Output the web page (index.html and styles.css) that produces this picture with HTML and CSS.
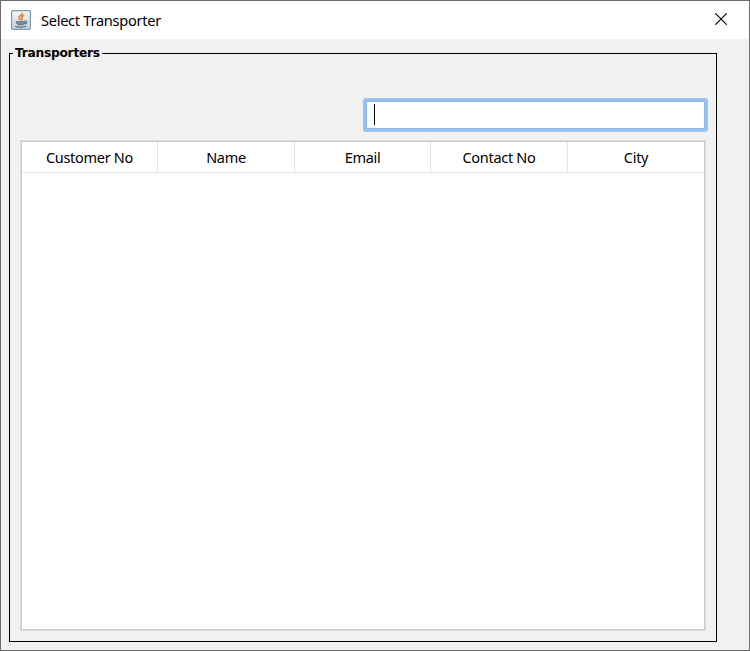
FILE: index.html
```html
<!DOCTYPE html>
<html lang="en">
<head>
<meta charset="utf-8">
<title>Select Transporter</title>
<link rel="stylesheet" href="styles.css">
</head>
<body>
<div class="window">
  <header class="titlebar">
    <svg class="app-icon" viewBox="0 0 20 20">
      <defs>
        <linearGradient id="tile" x1="0" y1="0" x2="0" y2="1">
          <stop offset="0" stop-color="#f7f8f9"/>
          <stop offset="1" stop-color="#c3d0da"/>
        </linearGradient>
      </defs>
      <rect x=".6" y=".6" width="18.8" height="18.8" rx="1.2" fill="url(#tile)" stroke="#8099ad" stroke-width="1.2"/>
      <path d="M11.500 2.800C12 5.200 7.600 5.700 8 7.700C8.200 8.700 9 9.300 9.200 10.500M13.200 5.300C10.800 6 10.300 7.200 11 8.200C11.400 9 11.200 9.700 10.600 10.400" fill="none" stroke="#ee8434" stroke-width="1.700"/>
      <path d="M5 11.500H13.500C13.500 13.600 12.700 14.700 11.700 14.900H7.500C6.300 14.700 5.200 13.500 5 11.500Z" fill="#6f8fa9" stroke="#54778f" stroke-width=".8"/>
      <path d="M13.500 11.200C17 10.300 16.600 13.900 12.700 13.900M4 16.200C6 17.400 13.500 17.400 15.500 16" fill="none" stroke="#54778f" stroke-width="1.300"/>
    </svg>
    <h1 class="title">Select Transporter</h1>
    <svg class="close" viewBox="0 0 12 12"><path d="M.3 .3L11.700 11.700M11.700 .3L.3 11.700"/></svg>
  </header>
  <fieldset class="group">
    <legend class="legend">Transporters</legend>
    <div class="search"><span class="caret"></span></div>
    <div class="table">
      <div class="head">
        <div class="cell">Customer No</div>
        <div class="cell">Name</div>
        <div class="cell">Email</div>
        <div class="cell">Contact No</div>
        <div class="cell">City</div>
      </div>
    </div>
  </fieldset>
</div>
</body>
</html>
```
FILE: styles.css
```css
* { box-sizing: border-box; }
body { margin: 0; overflow: hidden; }
.window {
  width: 750px;
  height: 651px;
  border: 1px solid #6c6a6b;
  background: #f1f1f1;
  font-family: "Noto Sans", "Open Sans", sans-serif;
  color: #000;
}
.titlebar {
  display: flex;
  align-items: center;
  height: 38px;
  padding: 0 22px 0 10px;
  background: #fff;
}
.app-icon { width: 20px; height: 20px; }
.title {
  margin: 1px auto 0 10px;
  font-size: 14.6px;
  font-weight: 400;
  line-height: 21px;
  letter-spacing: -0.28px;
  white-space: nowrap;
}
.close {
  width: 12px;
  height: 12px;
  margin-bottom: 2px;
  fill: none;
  stroke: #000;
  stroke-width: 1.1;
}
.group {
  display: block;
  width: 708px;
  height: 596px;
  margin: 7px 0 0 8px;
  padding: 37px 8px 0 10px;
  border: 1px solid #000;
}
.legend {
  margin-left: -7px;
  padding: 0 2px;
  height: 15px;
  width: 89px;
  font: bold 12.3px/15px "DejaVu Sans", sans-serif;
  letter-spacing: -0.3px;
  white-space: nowrap;
}
.search {
  width: 345px;
  height: 34px;
  margin-left: auto;
  padding: 2px 7px;
  border: 3px solid #97c3f0;
  border-radius: 3px;
  background: #fff;
  box-shadow: inset 0 0 0 1px #8db9e6;
}
.caret {
  display: block;
  width: 1px;
  height: 21px;
  margin: 1px 0 0 1px;
  background: #000;
}
.table {
  width: 686px;
  height: 491px;
  margin-top: 8px;
  border: 1px solid #dcdcdc;
  background: #fff;
  box-shadow: inset 0 0 0 1px #cacaca;
  padding: 1px;
}
.head {
  display: grid;
  grid-template-columns: 136px 137px 136px 137px 136px;
  height: 31px;
  border-bottom: 1px solid #e3e3e3;
}
.cell {
  display: flex;
  align-items: center;
  justify-content: center;
  border-right: 1px solid #e3e3e3;
  font-size: 14.5px;
  letter-spacing: -0.3px;
  white-space: nowrap;
}
.cell:last-child { border-right: 0; }
```
